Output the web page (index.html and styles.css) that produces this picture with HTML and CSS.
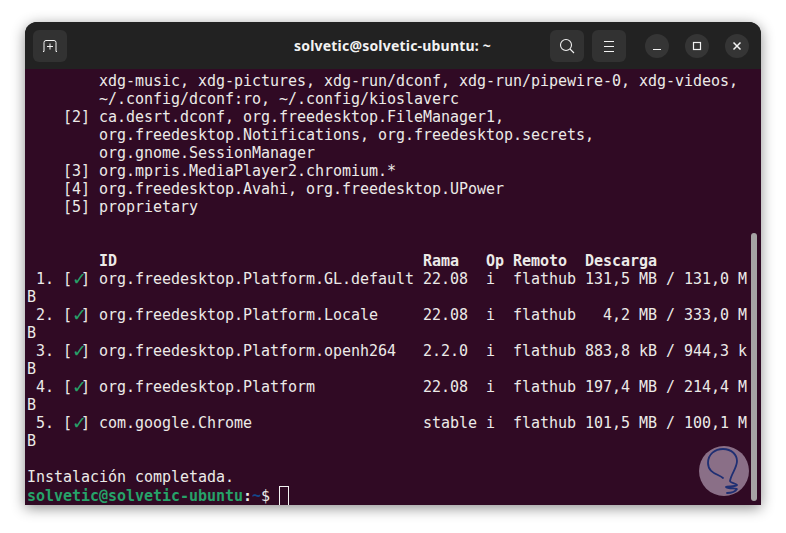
FILE: index.html
```html
<!DOCTYPE html>
<html lang="es">
<head>
<meta charset="utf-8">
<title>solvetic@solvetic-ubuntu: ~</title>
<link rel="stylesheet" href="styles.css">
</head>
<body>
<div class="window">
  <header class="titlebar">
    <div class="side">
      <button class="tool" aria-label="Nueva pestaña">
        <svg width="16" height="16" viewBox="0 0 16 16" fill="none" stroke="#f2f2f2" stroke-width="1"><path d="M1 13.500h1V4.500a2 2 0 0 1 2-2h8a2 2 0 0 1 2 2v9h1"/><path d="M8 5.500v6M5 8.500h6"/></svg>
      </button>
    </div>
    <div class="title">solvetic@solvetic-ubuntu: ~</div>
    <div class="side end">
      <button class="tool" aria-label="Buscar">
        <svg width="16" height="16" viewBox="0 0 16 16" fill="none" stroke="#f2f2f2" stroke-width="1.100"><circle cx="7" cy="7" r="5.500"/><path d="M11 11l4 4"/></svg>
      </button>
      <button class="tool" aria-label="Menú">
        <svg width="16" height="16" viewBox="0 0 16 16" fill="none" stroke="#f2f2f2" stroke-width="1"><path d="M3 3.500h10M3 8.500h10M3 13.500h10"/></svg>
      </button>
      <div class="controls">
        <button class="wbtn" aria-label="Minimizar">
          <svg width="10" height="10" viewBox="0 0 10 10" fill="none" stroke="#f2f2f2" stroke-width="1.200"><path d="M1 8.500h8"/></svg>
        </button>
        <button class="wbtn" aria-label="Maximizar">
          <svg width="10" height="10" viewBox="0 0 10 10" fill="none" stroke="#f2f2f2" stroke-width="1.200"><rect x="1.500" y="1.500" width="7" height="7"/></svg>
        </button>
        <button class="wbtn" aria-label="Cerrar">
          <svg width="10" height="10" viewBox="0 0 10 10" fill="none" stroke="#f2f2f2" stroke-width="1.500"><path d="M1.500 1.500l7 7M8.500 1.500l-7 7"/></svg>
        </button>
      </div>
    </div>
  </header>
  <main class="terminal">
<pre class="output">        xdg-music, xdg-pictures, xdg-run/dconf, xdg-run/pipewire-0, xdg-videos,
        ~/.config/dconf:ro, ~/.config/kioslaverc
    [2] ca.desrt.dconf, org.freedesktop.FileManager1,
        org.freedesktop.Notifications, org.freedesktop.secrets,
        org.gnome.SessionManager
    [3] org.mpris.MediaPlayer2.chromium.*
    [4] org.freedesktop.Avahi, org.freedesktop.UPower
    [5] proprietary


<b>        ID                                  Rama   Op Remoto  Descarga</b>
 1. [<span class="check">✓</span>] org.freedesktop.Platform.GL.default 22.08  i  flathub 131,5 MB / 131,0 M
B
 2. [<span class="check">✓</span>] org.freedesktop.Platform.Locale     22.08  i  flathub   4,2 MB / 333,0 M
B
 3. [<span class="check">✓</span>] org.freedesktop.Platform.openh264   2.2.0  i  flathub 883,8 kB / 944,3 k
B
 4. [<span class="check">✓</span>] org.freedesktop.Platform            22.08  i  flathub 197,4 MB / 214,4 M
B
 5. [<span class="check">✓</span>] com.google.Chrome                   stable i  flathub 101,5 MB / 100,1 M
B

Instalación completada.
<b class="ok">solvetic@solvetic-ubuntu</b><b>:</b><b class="path">~</b>$ <span class="cursor"> </span></pre>
    <div class="scrollbar"></div>
    <div class="badge">
      <svg width="50" height="50" viewBox="0 0 50 50" fill="none" stroke="#1f2f73" stroke-width="1.800" stroke-linecap="round" stroke-linejoin="round"><path d="M24 32C19 28 9 27 9 17C9 8 16 3 24 3C33 3 38 9 38 15C38 22 32 28 31 35C31 37 37 37 38 39C37 41 28 40 27 41C28 43 38 42 38 43C36 46 31 47 28 47"/></svg>
    </div>
  </main>
</div>
</body>
</html>
```
FILE: styles.css
```css
* { box-sizing: border-box; }
html, body { margin: 0; height: 100%; background: #fff; overflow: hidden; }
body { padding: 22px 25px 28px; }
.window {
  width: 736px;
  height: 483px;
  display: flex;
  flex-direction: column;
  border-radius: 12px 12px 0 0;
  overflow: hidden;
  background: #222;
  box-shadow: 0 3px 14px rgba(0, 0, 0, .45);
}
.titlebar {
  flex: none;
  height: 47px;
  padding: 8px 12px 7px 8px;
  display: grid;
  grid-template-columns: 1fr auto 1fr;
  align-items: center;
  background: #222;
}
.side { display: flex; align-items: center; gap: 8px; }
.side.end { justify-content: flex-end; }
.title {
  font: bold 14px/20px "Noto Sans", sans-serif;
  letter-spacing: .2px;
  color: #f2f2f2;
  white-space: pre;
  padding-left: 3px;
}
button { border: 0; padding: 0; display: flex; align-items: center; justify-content: center; }
.tool { width: 34px; height: 32px; border-radius: 6px; background: #323232; }
.controls { display: flex; gap: 16px; margin-left: 11px; }
.wbtn { width: 24px; height: 24px; border-radius: 50%; background: #353535; }
.terminal { flex: 1; position: relative; background: #300a24; padding: 3px 0 0 2px; }
.output {
  margin: 0;
  font: 15px/18px "DejaVu Sans Mono", monospace;
  letter-spacing: -.03px;
  color: #eceae8;
  white-space: pre;
}
.output b { font-weight: bold; }
.ok { color: #26a269; }
.check {
  display: inline-block;
  width: 9px;
  height: 18px;
  overflow: visible;
  text-align: center;
  font: 18px/18px "DejaVu Sans", sans-serif;
  color: #26a269;
  vertical-align: top;
}
.path { color: #12488b; }
.cursor { display: inline-block; width: 10px; height: 20px; margin-bottom: -5px; border: 1px solid #f2f2f2; }
.scrollbar {
  position: absolute;
  top: 164px;
  right: 4px;
  width: 6px;
  height: 268px;
  border-radius: 3px;
  background: #a5a3a4;
}
.badge {
  position: absolute;
  top: 377px;
  left: 674px;
  width: 50px;
  height: 50px;
  border-radius: 50%;
  background: #8a6f87;
}
```
